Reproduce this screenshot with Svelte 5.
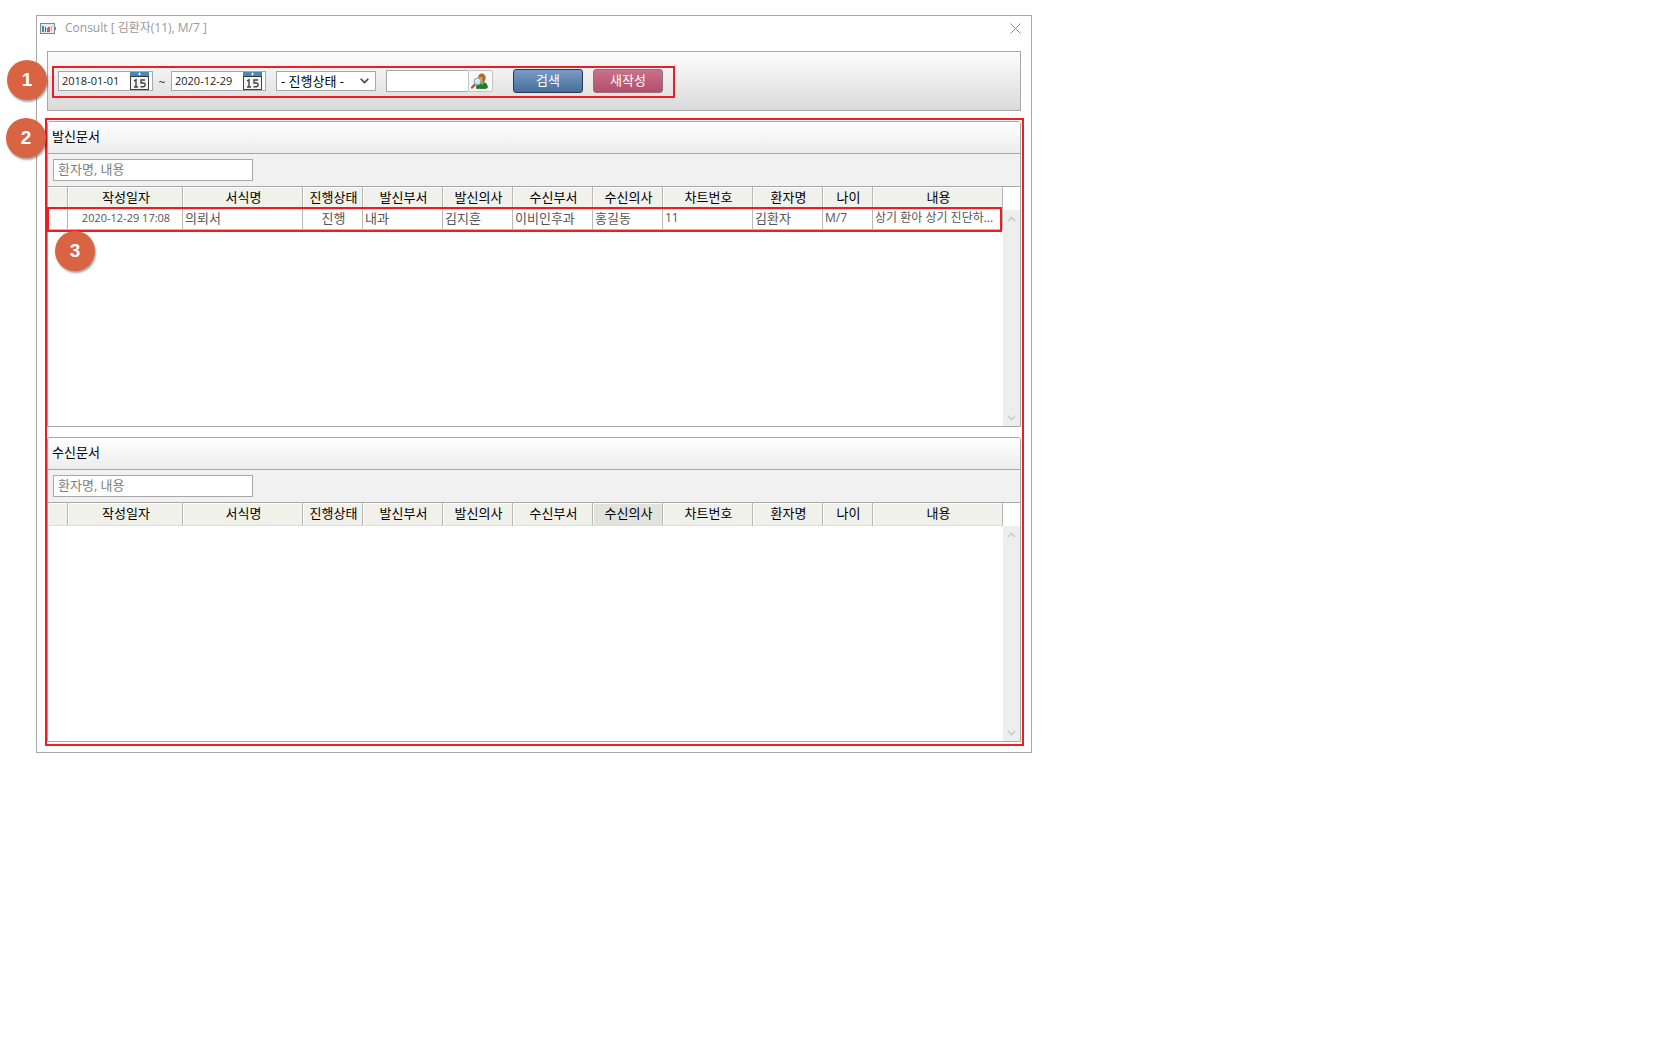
<script>
  const columns = [
    { label: '', width: 20 },
    { label: '작성일자', width: 115, center: true },
    { label: '서식명', width: 120 },
    { label: '진행상태', width: 60, center: true },
    { label: '발신부서', width: 80 },
    { label: '발신의사', width: 70 },
    { label: '수신부서', width: 80 },
    { label: '수신의사', width: 70 },
    { label: '차트번호', width: 90 },
    { label: '환자명', width: 70 },
    { label: '나이', width: 50 },
    { label: '내용', width: null },
  ];

  const panels = [
    {
      id: 'sent',
      title: '발신문서',
      active: '',
      rows: [
        ['', '2020-12-29 17:08', '의뢰서', '진행', '내과', '김지훈', '이비인후과', '홍길동', '11', '김환자', 'M/7', '상기 환아 상기 진단하...'],
      ],
    },
    { id: 'received', title: '수신문서', active: '수신의사', rows: [] },
  ];

  let from = $state('2018-01-01');
  let to = $state('2020-12-29');
  let patient = $state('');
  let filters = $state({ sent: '', received: '' });
</script>

{#snippet calendar()}
  <svg width="19" height="18" viewBox="0 0 19 18" aria-hidden="true">
    <rect x="0.5" y="0.5" width="18" height="17" fill="#f4f4f4" stroke="#3d4248" />
    <rect x="0" y="0" width="19" height="4" fill="#4a86b8" />
    <rect x="0" y="4" width="19" height="1" fill="#34393e" />
    <path d="M9.5 0.5v3M8 2h3" stroke="#e8f3fb" />
    <path d="M4 9l2-1.2V15M4 15h4" fill="none" stroke="#3f4347" stroke-width="1.4" />
    <path d="M15 8h-4v3h2.5q1.7 0 1.7 1.8T13.3 14.8H10.5" fill="none" stroke="#3f4347" stroke-width="1.4" />
  </svg>
{/snippet}

{#snippet chevron(up)}
  <svg width="9" height="6" viewBox="0 0 9 6" aria-hidden="true">
    <path d={up ? 'M1 5L4.5 1.5L8 5' : 'M1 1L4.5 4.5L8 1'} fill="none" stroke="#cbcbcb" stroke-width="1.6" />
  </svg>
{/snippet}

<main class="dialog">
  <header class="titlebar">
    <svg width="16" height="11" viewBox="0 0 16 11" aria-hidden="true">
      <rect x="0.5" y="0.5" width="14" height="10" fill="#e6eaed" stroke="#7f878d" />
      <rect x="14" y="4" width="2" height="3" fill="#7f878d" />
      <rect x="2" y="3" width="2" height="6" fill="#2f93ad" />
      <rect x="5" y="4" width="1" height="5" fill="#2a6c9c" />
      <rect x="7" y="5" width="1" height="4" fill="#6d8296" />
      <rect x="8" y="4" width="2" height="5" fill="#d9564a" />
      <rect x="11" y="3" width="1" height="5" fill="#b5babd" />
    </svg>
    <h1>Consult [ 김환자(11), M/7 ]</h1>
    <button class="close" aria-label="닫기">
      <svg width="11" height="11" viewBox="0 0 11 11" aria-hidden="true">
        <path d="M0.5 0.5l10 10M10.5 0.5l-10 10" stroke="#8c8c8c" />
      </svg>
    </button>
  </header>

  <div class="toolbar">
    <form class="search" onsubmit={(e) => e.preventDefault()}>
      <div class="date">
        <input type="text" aria-label="시작일" bind:value={from} />
        <button type="button" aria-label="시작일 선택">{@render calendar()}</button>
      </div>
      <span class="tilde">~</span>
      <div class="date">
        <input type="text" aria-label="종료일" bind:value={to} />
        <button type="button" aria-label="종료일 선택">{@render calendar()}</button>
      </div>
      <div class="status">
        <select aria-label="진행상태">
          <option>- 진행상태 -</option>
        </select>
        <svg width="9" height="6" viewBox="0 0 9 6" aria-hidden="true">
          <path d="M0.7 0.7L4.5 4.5L8.3 0.7" fill="none" stroke="#444" stroke-width="1.6" />
        </svg>
      </div>
      <div class="patient">
        <input type="text" aria-label="환자" bind:value={patient} />
        <button type="button" aria-label="환자 찾기">
          <svg width="17" height="16" viewBox="0 0 17 16" aria-hidden="true">
            <path d="M5.5 15.5Q5 10 9 9.5L13 9.5Q16.5 10.5 16.5 14.5L15 15.5z" fill="#17812b" stroke="#0b5d1c" stroke-width="0.6" />
            <path d="M9 8.5h4l-1 3h-2z" fill="#d99a4e" />
            <ellipse cx="10.8" cy="5" rx="3.9" ry="4.6" fill="#a8702a" />
            <path d="M7.5 4q2 1 3.5-.5L11.5 9H9z" fill="#e2ad68" />
            <path d="M4 11.5l-3 3" stroke="#b5532a" stroke-width="2.4" stroke-linecap="round" />
            <circle cx="6.5" cy="8.5" r="3.4" fill="#cfe6f5" stroke="#7f9fba" />
            <path d="M5 8q.5-1.5 2-1.5" fill="none" stroke="#fff" />
          </svg>
        </button>
      </div>
      <button type="submit" class="action primary">검색</button>
      <button type="button" class="action create">새작성</button>
    </form>
  </div>

  <div class="documents">
    {#each panels as panel (panel.id)}
      <section class="panel">
        <h2>{panel.title}</h2>
        <div class="filter">
          <input type="text" aria-label="{panel.title} 검색" placeholder="환자명, 내용" bind:value={filters[panel.id]} />
        </div>
        <div class="grid">
          <table>
            <colgroup>
              {#each columns as col}
                <col style:width={col.width ? `${col.width}px` : 'auto'} />
              {/each}
            </colgroup>
            <thead>
              <tr>
                {#each columns as col}
                  <th class:active={col.label !== '' && col.label === panel.active}>{col.label}</th>
                {/each}
              </tr>
            </thead>
            <tbody>
              {#each panel.rows as row}
                <tr>
                  {#each row as cell, i}
                    <td class:center={columns[i].center}>{cell}</td>
                  {/each}
                </tr>
              {/each}
            </tbody>
          </table>
          <div class="scrollbar">
            <button aria-label="위로">{@render chevron(true)}</button>
            <button aria-label="아래로">{@render chevron(false)}</button>
          </div>
        </div>
      </section>
    {/each}
  </div>

  <span class="badge one">1</span>
  <span class="badge two">2</span>
  <span class="badge three">3</span>
</main>

<style>
  :global(body) {
    background: #fff;
  }

  .dialog,
  .dialog * {
    box-sizing: border-box;
  }

  .dialog {
    position: relative;
    width: calc(100% - 72px);
    max-width: 996px;
    margin: 15px 36px;
    padding: 0 10px 10px;
    border: 1px solid #a8a8a8;
    background: #fff;
    color: #000;
    font: 12px/16px 'Open Sans', 'Noto Sans CJK KR', sans-serif;
  }

  input,
  select,
  button {
    margin: 0;
    font: inherit;
    color: inherit;
  }

  button {
    display: flex;
    align-items: center;
    justify-content: center;
    padding: 0;
    border: 0;
    background: none;
  }

  svg {
    flex-shrink: 0;
  }

  .titlebar {
    display: flex;
    align-items: center;
    gap: 9px;
    height: 24px;
    margin: 0 0 11px -7px;
  }

  h1 {
    flex: 1;
    margin: 0;
    font-size: 12px;
    font-weight: 400;
    color: #999;
  }

  .close {
    width: 11px;
    height: 11px;
  }

  .toolbar {
    height: 60px;
    padding: 14px 4px;
    border: 1px solid #a8a8a8;
    background: linear-gradient(#fdfdfd, #dadada);
  }

  .search {
    display: flex;
    align-items: center;
    width: 623px;
    height: 32px;
    padding: 0 4px 2px;
    border: 2px solid #ee1c25;
  }

  .date {
    display: flex;
    align-items: center;
    width: 95px;
    height: 20px;
    padding-right: 3px;
    border: 1px solid #a8a8a8;
    background: #fff;
  }

  .date input {
    flex: 1;
    min-width: 0;
    height: 18px;
    padding: 0 0 2px 3px;
    border: 0;
    background: none;
    font-size: 11px;
    color: #222;
  }

  .tilde {
    width: 18px;
    padding-top: 3px;
    text-align: center;
    color: #16406e;
  }

  .status {
    display: flex;
    align-items: center;
    width: 100px;
    height: 20px;
    margin-left: 10px;
    padding-right: 6px;
    border: 1px solid #a8a8a8;
    background: #fff;
  }

  .status select {
    flex: 1;
    min-width: 0;
    height: 18px;
    padding: 0 0 0 4px;
    border: 0;
    background: none;
    appearance: none;
    font-size: 13px;
    line-height: 18px;
  }

  .patient {
    display: flex;
    height: 22px;
    margin: 0 20px 0 10px;
  }

  .patient input {
    width: 82px;
    padding: 0 4px;
    border: 1px solid #a8a8a8;
    border-right: 0;
    background: #fff;
  }

  .patient button {
    width: 25px;
    padding-right: 2px;
    border: 1px solid #c4c4c4;
    border-radius: 2px;
    background: #f8f8f8;
  }

  .action {
    width: 70px;
    height: 24px;
    padding-bottom: 2px;
    border: 1px solid #2d3a52;
    border-radius: 3px;
    color: #fff;
    font-size: 13px;
  }

  .primary {
    margin-right: 10px;
    background: linear-gradient(#779cc6, #476f9b);
  }

  .create {
    border-color: #94707d;
    background: linear-gradient(#c9708a, #b0506c);
  }

  .documents {
    display: flex;
    flex-direction: column;
    gap: 10px;
    margin: 7px -3px -4px -2px;
    padding: 1px 1px 2px 0;
    border: 2px solid #ee1c25;
  }

  .panel {
    border: 1px solid #a8a8a8;
    border-radius: 3px 3px 0 0;
  }

  h2 {
    display: flex;
    align-items: center;
    height: 32px;
    margin: 0;
    padding: 0 4px 4px;
    border-bottom: 1px solid #a8a8a8;
    border-radius: 2px 2px 0 0;
    background: linear-gradient(#fff, #ececec);
    font-size: 13px;
    font-weight: 400;
  }

  .filter {
    display: flex;
    align-items: center;
    height: 33px;
    padding-left: 5px;
    border-bottom: 1px solid #a8a8a8;
    background: #f1f1f1;
  }

  .filter input {
    width: 200px;
    height: 22px;
    padding: 0 4px 2px;
    border: 1px solid #a8a8a8;
    background: #fff;
    font-size: 13px;
  }

  .filter input::placeholder {
    color: #808080;
    opacity: 1;
  }

  .grid {
    display: flex;
    align-items: flex-start;
    min-height: 239px;
  }

  .panel:last-child .grid {
    min-height: 238px;
  }

  table {
    flex: 1;
    width: 100%;
    min-width: 0;
    border-collapse: separate;
    border-spacing: 0;
    table-layout: fixed;
    font-size: 13px;
  }

  th,
  td {
    overflow: hidden;
    border-right: 1px solid #b8b8b8;
    white-space: nowrap;
    text-overflow: ellipsis;
  }

  th {
    height: 23px;
    padding: 0 0 2px 2px;
    border-bottom: 1px solid #dcdcdc;
    background: #f0f1eb;
    box-shadow: inset 1px 1px #fff;
    font-weight: 400;
    text-align: center;
  }

  th.active {
    background: #e2e3dd;
  }

  td {
    height: 20px;
    padding: 0 0 3px 2px;
    border-bottom: 1px solid #b8b8b8;
    color: #555;
  }

  td.center {
    text-align: center;
  }

  td:nth-child(2) {
    font-size: 11px;
  }

  td:nth-child(9),
  td:nth-child(11),
  td:nth-child(12) {
    font-size: 12px;
  }

  tbody tr {
    position: relative;
  }

  td:first-child::after {
    content: '';
    position: absolute;
    inset: -3px 1px -2px -1px;
    border: 2px solid #ee1c25;
    pointer-events: none;
  }

  .scrollbar {
    display: flex;
    flex-direction: column;
    align-self: stretch;
    align-items: center;
    justify-content: space-between;
    width: 17px;
    margin-top: 23px;
    background: #eee;
  }

  .scrollbar button {
    height: 17px;
  }

  .badge {
    position: absolute;
    display: flex;
    align-items: center;
    justify-content: center;
    width: 40px;
    height: 40px;
    border-radius: 50%;
    background: #d96444;
    box-shadow: 1px 2px 2px rgba(0, 0, 0, 0.35);
    color: #fff;
    font: bold 19px/20px 'Liberation Sans', sans-serif;
  }

  .one {
    top: 44px;
    left: -30px;
  }

  .two {
    top: 102px;
    left: -31px;
  }

  .three {
    top: 215px;
    left: 18px;
  }
</style>
